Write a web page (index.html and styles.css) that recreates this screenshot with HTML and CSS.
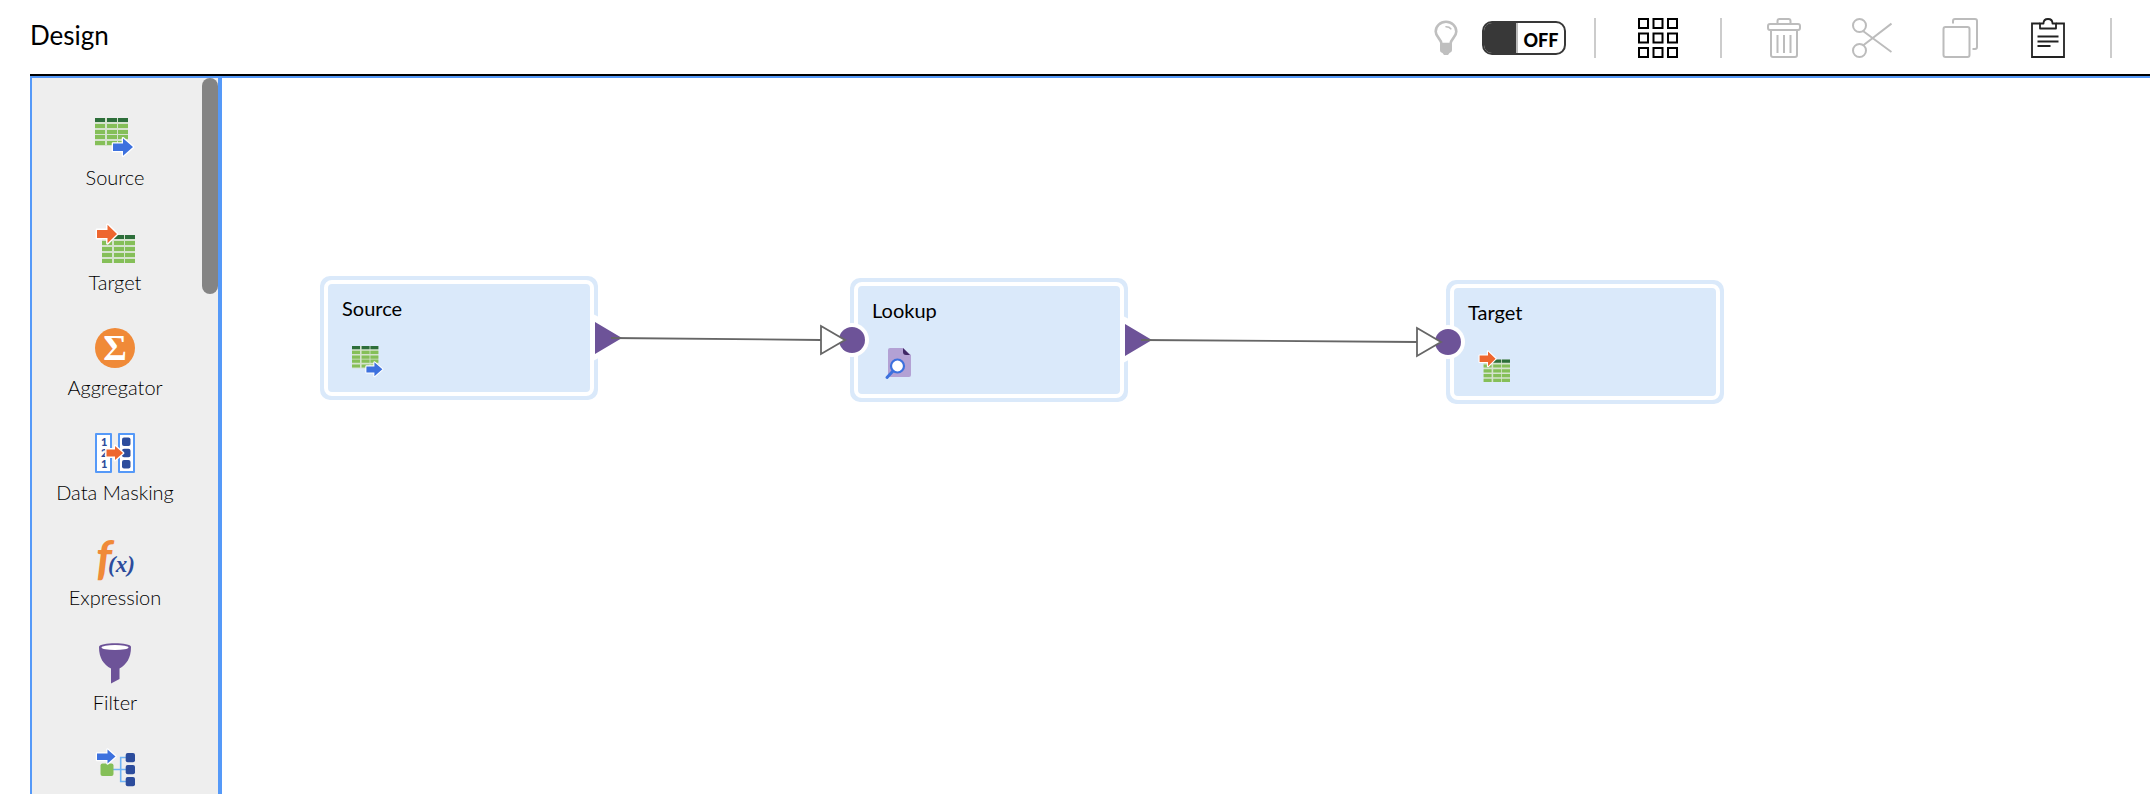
FILE: index.html
```html
<!DOCTYPE html>
<html lang="en">
<head>
<meta charset="utf-8">
<meta name="viewport" content="width=device-width, initial-scale=1">
<title>Design</title>
<link rel="stylesheet" href="styles.css">
</head>
<body>
<svg class="defs" aria-hidden="true">
  <symbol id="icon-source" viewBox="0 0 40 40">
    <path fill="#d5e3cd" d="M0 0h33v28H0z"/>
    <path fill="#2d6e3a" d="M0 0h10v4H0zM12 0h10v4H12zM23 0h10v4H23z"/>
    <path fill="#85bf58" d="M0 6h10v4H0zM12 6h10v4H12zM23 6h10v4H23zM0 12h10v4H0zM12 12h10v4H12zM23 12h10v4H23zM0 17h10v4H0zM12 17h10v4H12zM23 17h10v4H23zM0 23h10v4H0zM12 23h10v4H12zM23 23h10v4H23z"/>
    <path fill="#3d71de" stroke="#fff" stroke-width="2.600" stroke-linejoin="round" paint-order="stroke" d="M18 25.500h10V20.300L38 29l-10 8.700V33H18z"/>
  </symbol>
  <symbol id="icon-target" viewBox="0 0 40 40">
    <path fill="#d5e3cd" d="M7 12h33v28H7z"/>
    <path fill="#2d6e3a" d="M7 12h10v4H7zM19 12h10v4H19zM30 12h10v4H30z"/>
    <path fill="#85bf58" d="M7 18h10v4H7zM19 18h10v4H19zM30 18h10v4H30zM7 24h10v4H7zM19 24h10v4H19zM30 24h10v4H30zM7 30h10v4H7zM19 30h10v4H19zM30 30h10v4H30zM7 36h10v4H7zM19 36h10v4H19zM30 36h10v4H30z"/>
    <path fill="#ee662f" stroke="#fff" stroke-width="2.800" stroke-linejoin="round" paint-order="stroke" d="M2 7h10.500V1.800L22 11l-9.500 9.200V15H2z"/>
  </symbol>
  <symbol id="icon-lookup" viewBox="0 0 32 32">
    <path fill="#b3a1d4" d="M8 0h13l8 7v20a2 2 0 0 1-2 2H8a2 2 0 0 1-2-2V2a2 2 0 0 1 2-2z"/>
    <path fill="#3f2765" d="M21 0l7 7h-4a3 3 0 0 1-3-3z"/>
    <path stroke="#3d71de" stroke-width="3" stroke-linecap="round" d="M11 23l-6 6.500"/>
    <circle cx="15.500" cy="18" r="6.500" fill="#fff" stroke="#3d71de" stroke-width="2.200"/>
  </symbol>
</svg>

<header class="topbar">
  <h1 class="title">Design</h1>
  <div class="toolbar" role="toolbar" aria-label="Design tools">
    <svg class="bulb" viewBox="0 0 24 36" fill="none" aria-hidden="true">
      <path stroke="#bfbfbf" stroke-width="2.600" d="M7.500 24C7 18.500 1.700 17 1.700 11.500a10.300 9.800 0 0 1 20.600 0c0 5.500-5.300 7-5.800 12.500z"/>
      <path stroke="#bfbfbf" stroke-width="1.600" stroke-linecap="round" d="M12 6.800c2.400 0 3.800.6 4.800 2"/>
      <path fill="#bfbfbf" d="M6 23h12v7c0 2-1.500 2.500-2.500 3L14 35h-4l-1.500-2C7 32.500 6 32 6 30z"/>
    </svg>
    <button class="toggle" type="button" role="switch" aria-checked="false"><span class="toggle-knob"></span><span class="toggle-text">OFF</span></button>
    <span class="divider divider-first"></span>
    <button class="tool" type="button" aria-label="Layout grid">
      <svg viewBox="0 0 40 40" fill="none" stroke="#000" stroke-width="2"><path d="M1 1h9v9H1zM15.500 1h9v9h-9zM30 1h9v9h-9zM1 15.500h9v9H1zM15.500 15.500h9v9h-9zM30 15.500h9v9h-9zM1 30h9v9H1zM15.500 30h9v9h-9zM30 30h9v9h-9z"/></svg>
    </button>
    <span class="divider"></span>
    <div class="tool-group">
      <button class="tool" type="button" aria-label="Delete">
        <svg viewBox="0 0 40 40" fill="none" stroke="#bcbcbc" stroke-width="2"><rect x="4" y="6" width="32" height="6" rx="2"/><path d="M13.500 5.500V3a2 2 0 0 1 2-2h9a2 2 0 0 1 2 2v2.500M7 12.500V37a2 2 0 0 0 2 2h22a2 2 0 0 0 2-2V12.500M13.500 17v18M20 17v18M26.500 17v18"/></svg>
      </button>
      <button class="tool" type="button" aria-label="Cut">
        <svg viewBox="0 0 40 40" fill="none" stroke="#bcbcbc" stroke-width="2"><circle cx="7.500" cy="7.500" r="6.500"/><circle cx="7.500" cy="32.500" r="6.500"/><path d="M11 13l28.500 21M11 27.500L39.500 5.500"/></svg>
      </button>
      <button class="tool" type="button" aria-label="Copy">
        <svg viewBox="0 0 40 40" fill="none" stroke="#bcbcbc" stroke-width="2"><rect x="3.500" y="9" width="26" height="30" rx="2"/><path d="M13 5.500V3a2 2 0 0 1 2-2h20a2 2 0 0 1 2 2v26a2 2 0 0 1-2 2h-2.500"/></svg>
      </button>
      <button class="tool" type="button" aria-label="Paste">
        <svg viewBox="0 0 40 40" fill="none" stroke="#222" stroke-width="1.800"><path d="M12 5.500H4V39h32V5.500h-8"/><path stroke-linejoin="round" d="M12 10.500V5.500h3.500C15.500 2 17 1 20 1s4.500 1 4.500 4.500H28v5z"/><path d="M9.500 18.500h21M9.500 23.500h21M9.500 28h13"/></svg>
      </button>
    </div>
    <span class="divider"></span>
  </div>
</header>

<main class="workspace">
  <aside class="palette" aria-label="Transformations">
    <div class="palette-list">
      <button class="palette-item" type="button"><svg class="palette-icon"><use href="#icon-source"/></svg><span>Source</span></button>
      <button class="palette-item" type="button"><svg class="palette-icon"><use href="#icon-target"/></svg><span>Target</span></button>
      <button class="palette-item" type="button">
        <svg class="palette-icon" viewBox="0 0 40 40" aria-hidden="true"><circle cx="20" cy="20" r="20" fill="#f08a38"/><text class="sigma" x="20" y="32" text-anchor="middle" fill="#fff">Σ</text></svg>
        <span>Aggregator</span>
      </button>
      <button class="palette-item" type="button">
        <svg class="palette-icon" viewBox="0 0 40 40" aria-hidden="true">
          <path fill="#fff" stroke="#5599f8" stroke-width="2" stroke-linejoin="round" d="M1 1h15v38H1zM24 1h15v38H24z"/>
          <g class="mask-digits" fill="#2c4c9c"><text x="6" y="13">1</text><text x="6" y="24">2</text><text x="6" y="35">1</text></g>
          <g fill="#2c4c9c"><rect x="27" y="4.500" width="8.500" height="8.500" rx="2"/><rect x="27" y="15.800" width="8.500" height="8.500" rx="2"/><rect x="27" y="27" width="8.500" height="8.500" rx="2"/></g>
          <path fill="#ee662f" stroke="#fff" stroke-width="2.800" paint-order="stroke" stroke-linejoin="round" d="M11.500 16.500H20V13l8 7-8 7v-3.500h-8.500z"/>
        </svg>
        <span>Data Masking</span>
      </button>
      <button class="palette-item" type="button">
        <svg class="palette-icon" viewBox="0 0 40 40" aria-hidden="true"><text class="fx-f" x="1" y="37" fill="#f08a38">f</text><text class="fx-x" x="13" y="34" fill="#2c4c9c">(x)</text></svg>
        <span>Expression</span>
      </button>
      <button class="palette-item" type="button">
        <svg class="palette-icon" viewBox="0 0 40 40" aria-hidden="true"><path fill="#6d5398" d="M4 4c0-5 32-5 32 0 0 11-4.500 17.500-11.500 21.500V36L16 40.500V25.500C8.500 21.500 4 15 4 4z"/><ellipse cx="20" cy="4.500" rx="13.500" ry="2.600" fill="#fff"/></svg>
        <span>Filter</span>
      </button>
      <button class="palette-item" type="button" aria-label="Router">
        <svg class="palette-icon" viewBox="0 0 40 40" aria-hidden="true">
          <path fill="none" stroke="#6fb3f5" stroke-width="1.600" d="M18 21.500h14M32 9.500h-6.300v24H32"/>
          <rect x="5.500" y="15.500" width="13" height="12.500" rx="2" fill="#85bf58"/>
          <g fill="#2c4c9c"><rect x="30.700" y="5" width="9.300" height="9.300" rx="2"/><rect x="30.700" y="17" width="9.300" height="9.300" rx="2"/><rect x="30.700" y="29" width="9.300" height="9.300" rx="2"/></g>
          <path fill="#3d71de" stroke="#fff" stroke-width="2.400" paint-order="stroke" stroke-linejoin="round" d="M2 5.500h10.500V1.500l8 7-8 7V12H2z"/>
        </svg>
      </button>
    </div>
    <div class="scroll-track"><div class="scroll-thumb"></div></div>
  </aside>

  <section class="canvas" aria-label="Mapping canvas">
    <article class="node node-source"><h2>Source</h2><svg class="node-icon"><use href="#icon-source"/></svg></article>
    <article class="node node-lookup"><h2>Lookup</h2><svg class="node-icon"><use href="#icon-lookup"/></svg></article>
    <article class="node node-target"><h2>Target</h2><svg class="node-icon"><use href="#icon-target"/></svg></article>
    <svg class="links" aria-hidden="true">
      <g fill="#fff">
        <path d="M371 236l30 15v16l-30 16z"/>
        <path d="M901 238l30 15v16l-30 16z"/>
        <circle cx="630" cy="262" r="17"/>
        <circle cx="1226" cy="264" r="17"/>
      </g>
      <g fill="#6d5398">
        <path d="M373 244l27 16-27 16z"/>
        <path d="M903 246l27 16-27 16z"/>
        <circle cx="630" cy="262" r="13"/>
        <circle cx="1226" cy="264" r="13"/>
      </g>
      <g fill="#fff" stroke="#666" stroke-width="1.800">
        <path d="M389 260L599 262M919 262L1195 264"/>
        <path d="M599 248l24 14-24 14z"/>
        <path d="M1195 250l24 14-24 14z"/>
      </g>
    </svg>
  </section>
</main>
</body>
</html>
```
FILE: styles.css
```css
* {
  box-sizing: border-box;
}

body {
  margin: 0;
  height: 100vh;
  display: flex;
  flex-direction: column;
  overflow: hidden;
  background: #fff;
  color: #000;
  font-family: Lato, "Open Sans", sans-serif;
}

button {
  margin: 0;
  padding: 0;
  border: 0;
  background: none;
  color: inherit;
  font: inherit;
}

.defs {
  display: none;
}

.topbar {
  flex: none;
  display: flex;
  align-items: center;
  justify-content: space-between;
  height: 76px;
  margin-left: 30px;
  padding-right: 38px;
  border-bottom: 2px solid #000;
}

.title {
  margin: 0;
  padding-bottom: 4px;
  font-size: 26px;
  font-weight: 400;
  line-height: 32px;
}

.toolbar {
  display: flex;
  align-items: center;
  padding-top: 2px;
}

.bulb {
  width: 24px;
  height: 36px;
  margin-right: 24px;
}

.toggle {
  display: flex;
  align-items: stretch;
  width: 84px;
  height: 34px;
  border: 2px solid #383838;
  border-radius: 10px;
  overflow: hidden;
  background: #fff;
}

.toggle-knob {
  width: 34px;
  background: #383838;
  border-right: 2px solid #bbb;
}

.toggle-text {
  flex: 1;
  text-align: center;
  font-size: 18px;
  font-weight: 900;
  line-height: 34px;
}

.divider {
  width: 2px;
  height: 40px;
  margin: 0 42px;
  background: #ccc;
}

.divider-first {
  margin-left: 28px;
}

.divider:last-child {
  margin-right: 0;
}

.tool-group {
  display: flex;
  gap: 48px;
}

.tool,
.tool svg {
  display: block;
  width: 40px;
  height: 40px;
}

.workspace {
  flex: 1;
  min-height: 0;
  display: flex;
  margin-left: 30px;
  border-top: 2px solid #5599f8;
}

.palette {
  flex: none;
  display: flex;
  width: 192px;
  border-left: 2px solid #5599f8;
  border-right: 4px solid #5599f8;
  background: #eee;
  overflow: hidden;
}

.palette-list {
  flex: 1;
  display: flex;
  flex-direction: column;
  gap: 34px;
  padding: 40px 4px 0 0;
}

.palette-item {
  flex: none;
  display: flex;
  flex-direction: column;
  align-items: center;
  gap: 7px;
  font-size: 20px;
  font-weight: 300;
  line-height: 24px;
}

.palette-icon {
  width: 40px;
  height: 40px;
  overflow: visible;
}

.sigma {
  font-family: "Liberation Serif", serif;
  font-size: 36px;
  font-weight: 700;
}

.mask-digits {
  font-size: 11px;
  font-weight: 900;
}

.fx-f {
  font-size: 48px;
  font-style: italic;
  font-weight: 700;
}

.fx-x {
  font-family: "Liberation Serif", serif;
  font-size: 23px;
  font-style: italic;
  font-weight: 700;
}

.scroll-track {
  width: 16px;
}

.scroll-thumb {
  height: 216px;
  border-radius: 8px;
  background: #848484;
}

.canvas {
  position: relative;
  flex: 1;
  overflow: hidden;
}

.node {
  position: absolute;
  width: 278px;
  height: 124px;
  padding: 16px 18px;
  border: 4px solid #dae9fa;
  border-radius: 10px;
  background: #dae9fa;
}

.node::before {
  content: "";
  position: absolute;
  inset: 0;
  border: 4px solid #fff;
  border-radius: 8px;
}

.node h2 {
  margin: 0 0 26px;
  font-size: 20px;
  font-weight: 400;
  line-height: 24px;
}

.node-icon {
  display: block;
  width: 32px;
  height: 32px;
  margin-left: 10px;
}

.node-source {
  left: 98px;
  top: 198px;
}

.node-lookup {
  left: 628px;
  top: 200px;
}

.node-target {
  left: 1224px;
  top: 202px;
}

.links {
  position: absolute;
  inset: 0;
  width: 100%;
  height: 100%;
}
```
